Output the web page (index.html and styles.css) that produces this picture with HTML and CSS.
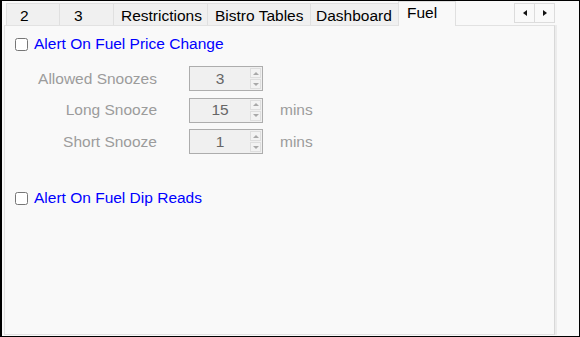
FILE: index.html
```html
<!DOCTYPE html>
<html>
<head>
<meta charset="utf-8">
<link rel="stylesheet" href="styles.css">
</head>
<body>
<div class="frame">
  <div class="tabbar">
    <div class="tab tab-2">2</div>
    <div class="tab tab-3">3</div>
    <div class="tab tab-restr">Restrictions</div>
    <div class="tab tab-bistro">Bistro Tables</div>
    <div class="tab tab-dash">Dashboard</div>
    <div class="tab active">Fuel</div>
    <div class="scroller">
      <div class="sbtn"><span class="tri-left"></span></div>
      <div class="sbtn"><span class="tri-right"></span></div>
    </div>
  </div>
  <div class="panel">
    <label class="check-row"><input type="checkbox"><span>Alert On Fuel Price Change</span></label>
    <div class="snooze">
      <div class="srow">
        <span class="lbl">Allowed Snoozes</span>
        <div class="spin"><span class="val">3</span><span class="btns"><span class="arr"><span class="up"></span></span><span class="arr"><span class="down"></span></span></span></div>
      </div>
      <div class="srow">
        <span class="lbl">Long Snooze</span>
        <div class="spin"><span class="val">15</span><span class="btns"><span class="arr"><span class="up"></span></span><span class="arr"><span class="down"></span></span></span></div>
        <span class="unit">mins</span>
      </div>
      <div class="srow">
        <span class="lbl">Short Snooze</span>
        <div class="spin"><span class="val">1</span><span class="btns"><span class="arr"><span class="up"></span></span><span class="arr"><span class="down"></span></span></span></div>
        <span class="unit">mins</span>
      </div>
    </div>
    <label class="check-row second"><input type="checkbox"><span>Alert On Fuel Dip Reads</span></label>
  </div>
</div>
</body>
</html>
```
FILE: styles.css
```css
html, body { margin: 0; padding: 0; }
body {
  font-family: "Liberation Sans", Arial, sans-serif;
  font-size: 15.5px;
  background: #f9f9f9;
}
.frame {
  width: 580px;
  height: 337px;
  box-sizing: border-box;
  border: 1px solid #000;
  border-left-width: 2px;
  background: #f9f9f9;
  display: flex;
  flex-direction: column;
}
.tabbar {
  height: 24px;
  flex: none;
  display: flex;
  align-items: flex-end;
  padding-left: 4px;
}
.tab {
  box-sizing: border-box;
  height: 22px;
  border: 1px solid #e0e0e0;
  border-bottom: none;
  border-right: none;
  background: #f0f0f0;
  color: #000;
  padding-top: 3px;
  line-height: 18px;
  white-space: nowrap;
}
.tab-2 { width: 53px; padding-left: 13px; }
.tab-3 { width: 54px; padding-left: 14px; }
.tab-restr { width: 94px; padding-left: 7px; }
.tab-bistro { width: 103px; padding-left: 7px; }
.tab-dash { width: 88px; padding-left: 5px; }
.tab.active {
  width: 58px;
  height: 25px;
  margin-bottom: -1px;
  padding-left: 8px;
  padding-top: 2px;
  background: #f9f9f9;
  border-right: 1px solid #e0e0e0;
  position: relative;
  z-index: 1;
}
.scroller {
  margin-left: auto;
  margin-right: 24px;
  align-self: flex-start;
  margin-top: 2px;
  display: flex;
}
.sbtn {
  box-sizing: border-box;
  width: 21px;
  height: 20px;
  border: 1px solid #dcdcdc;
  background: #f9f9f9;
  display: flex;
  align-items: center;
  justify-content: center;
}
.sbtn + .sbtn { border-left: none; width: 20px; }
.tri-left {
  width: 0; height: 0;
  border-top: 3px solid transparent;
  border-bottom: 3px solid transparent;
  border-right: 4px solid #111;
}
.tri-right {
  width: 0; height: 0;
  border-top: 3px solid transparent;
  border-bottom: 3px solid transparent;
  border-left: 4px solid #111;
}
.panel {
  flex: 1;
  margin: 0 24px 1px 2px;
  border: 1px solid #e2e2e2;
  border-right-color: #d8d8d8;
  box-shadow: 2px 0 0 #ececec;
  background: #f9f9f9;
  padding: 9px 0 0 10px;
}
.check-row {
  display: flex;
  align-items: center;
  height: 18px;
  color: #0000ff;
}
.check-row input {
  margin: 0 6px 0 0;
  width: 13px;
  height: 13px;
}
.check-row.second { margin-top: 35px; }
.snooze {
  margin-top: 13px;
  display: flex;
  flex-direction: column;
  gap: 6.5px;
}
.srow {
  display: flex;
  align-items: center;
  height: 25px;
}
.lbl {
  width: 142px;
  text-align: right;
  color: #9c9c9c;
}
.spin {
  box-sizing: border-box;
  width: 74px;
  height: 25px;
  margin-left: 32px;
  border: 1px solid #adadad;
  background: #f0f0f0;
  display: flex;
  align-items: center;
  padding-right: 1px;
}
.val {
  flex: 1;
  text-align: center;
  color: #666;
}
.btns {
  width: 11px;
  height: 21px;
  display: flex;
  flex-direction: column;
  gap: 1px;
}
.arr {
  flex: 1;
  box-sizing: border-box;
  border: 1px solid #dedede;
  background: #f3f3f3;
  display: flex;
  align-items: center;
  justify-content: center;
}
.up {
  width: 0; height: 0;
  border-left: 3px solid transparent;
  border-right: 3px solid transparent;
  border-bottom: 3px solid #a9a9a9;
}
.down {
  width: 0; height: 0;
  border-left: 3px solid transparent;
  border-right: 3px solid transparent;
  border-top: 3px solid #a9a9a9;
}
.unit {
  margin-left: 17px;
  color: #9c9c9c;
}
```
